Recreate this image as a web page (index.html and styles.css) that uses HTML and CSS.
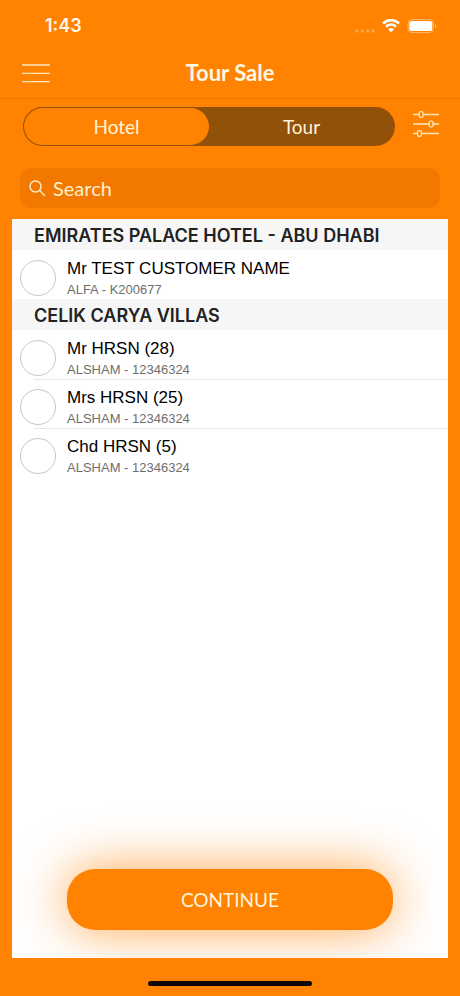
FILE: index.html
```html
<!DOCTYPE html>
<html lang="en">
<head>
  <meta charset="utf-8">
  <meta name="viewport" content="width=device-width, initial-scale=1">
  <title>Tour Sale</title>
  <link rel="stylesheet" href="styles.css">
</head>
<body>
  <div class="status-bar">
    <time class="clock">1:43</time>
    <div class="indicators">
      <svg width="20" height="18" viewBox="0 0 20 18" fill="#fff" fill-opacity=".28" aria-hidden="true">
        <circle cx="2" cy="12" r="1.800"/><circle cx="7.300" cy="12" r="1.800"/><circle cx="12.700" cy="12" r="1.800"/><circle cx="18" cy="12" r="1.800"/>
      </svg>
      <svg width="18" height="18" viewBox="0 0 18 18" fill="#fff" aria-hidden="true">
        <path d="M9 2.6c2.500 0 4.900 1 6.700 2.700a.4.4 0 0 0 .5 0l1.400-1.400a.4.4 0 0 0 0-.6 12.500 12.500 0 0 0-17.200 0 .4.4 0 0 0 0 .6l1.400 1.400a.4.4 0 0 0 .5 0A9.700 9.700 0 0 1 9 2.600z"/>
        <path d="M9 7.100c1.400 0 2.700.5 3.700 1.400.2.200.4.200.6 0l1.300-1.400a.4.4 0 0 0 0-.6 8.200 8.200 0 0 0-11.200 0 .4.4 0 0 0 0 .6l1.300 1.400c.2.200.4.200.6 0 1-.9 2.300-1.400 3.700-1.400z"/>
        <path d="M11.600 10.100a.4.4 0 0 1 0 .6l-2.300 2.300a.4.4 0 0 1-.6 0l-2.300-2.300a.4.4 0 0 1 0-.6 4.100 4.100 0 0 1 5.200 0z"/>
      </svg>
      <svg width="30" height="18" viewBox="0 0 30 18" aria-hidden="true">
        <rect x="1" y=".5" width="25.500" height="13" rx="4" fill="none" stroke="#fff" stroke-opacity=".4"/>
        <rect x="2.300" y="2" width="23" height="10" rx="2.500" fill="#fff"/>
        <path d="M28 5v4c.8-.3 1.300-1.100 1.300-2s-.5-1.700-1.300-2z" fill="#fff" fill-opacity=".45"/>
      </svg>
    </div>
  </div>

  <header class="nav-bar">
    <button class="icon-button" type="button" aria-label="Menu">
      <svg width="28" height="20" viewBox="0 0 28 20" stroke="#ffe7bd" stroke-width="1.400" aria-hidden="true">
        <path d="M0 2h28M0 10.400h28M0 18.600h28"/>
      </svg>
    </button>
    <h1 class="title">Tour Sale</h1>
  </header>

  <div class="mode-row">
    <fieldset class="segments" aria-label="Group by">
      <label class="segment"><input type="radio" name="mode" checked><span>Hotel</span></label>
      <label class="segment"><input type="radio" name="mode"><span>Tour</span></label>
    </fieldset>
    <button class="icon-button" type="button" aria-label="Filters">
      <svg width="26" height="26" viewBox="0 0 26 26" fill="none" stroke="#ffe7bd" stroke-width="1.300" aria-hidden="true">
        <path d="M0 3.500h6M10 3.500h16M0 13h16M20 13h6M0 22.500h4.500M8.500 22.500H26"/>
        <rect x="6.200" y=".7" width="3.800" height="5.600" rx="1.300"/>
        <rect x="16.200" y="10.200" width="3.800" height="5.600" rx="1.300"/>
        <rect x="4.500" y="19.700" width="3.800" height="5.600" rx="1.300"/>
      </svg>
    </button>
  </div>

  <label class="search">
    <svg width="17" height="17" viewBox="0 0 17 17" fill="none" stroke="#ffe9c4" stroke-width="1.400" stroke-linecap="round" aria-hidden="true">
      <circle cx="6.500" cy="6.500" r="5.500"/><path d="M10.600 10.600l5 5"/>
    </svg>
    <input type="search" placeholder="Search" aria-label="Search">
  </label>

  <main class="panel">
    <section>
      <h2 class="group-title">EMIRATES PALACE HOTEL - ABU DHABI</h2>
      <ul class="guests">
        <li class="guest"><label><input type="checkbox"><span class="text"><span class="name">Mr TEST CUSTOMER NAME</span><span class="detail">ALFA - K200677</span></span></label></li>
      </ul>
    </section>
    <section>
      <h2 class="group-title">CELIK CARYA VILLAS</h2>
      <ul class="guests">
        <li class="guest"><label><input type="checkbox"><span class="text"><span class="name">Mr HRSN (28)</span><span class="detail">ALSHAM - 12346324</span></span></label></li>
        <li class="guest"><label><input type="checkbox"><span class="text"><span class="name">Mrs HRSN (25)</span><span class="detail">ALSHAM - 12346324</span></span></label></li>
        <li class="guest"><label><input type="checkbox"><span class="text"><span class="name">Chd HRSN (5)</span><span class="detail">ALSHAM - 12346324</span></span></label></li>
      </ul>
    </section>
    <button class="continue" type="button">CONTINUE</button>
  </main>

  <div class="home-area"><div class="home-indicator"></div></div>
</body>
</html>
```
FILE: styles.css
```css
* {
  box-sizing: border-box;
}

body {
  margin: 0;
  min-height: 100vh;
  display: flex;
  flex-direction: column;
  background: #ff8200;
  font-family: Lato, "Liberation Sans", sans-serif;
}

button {
  border: 0;
  padding: 0;
  font: inherit;
  cursor: pointer;
}

.status-bar {
  height: 48px;
  padding: 4px 23px 0 45px;
  display: flex;
  align-items: center;
  justify-content: space-between;
}

.clock {
  color: #fff8ea;
  font: 600 18px/20px Inter, sans-serif;
}

.indicators {
  padding-top: 3px;
  display: flex;
  gap: 7px;
}

.icon-button {
  display: flex;
  background: none;
}

.nav-bar {
  height: 51px;
  padding: 0 22px;
  display: grid;
  grid-template-columns: 1fr auto 1fr;
  align-items: center;
  border-bottom: 1px solid #e97600;
}

.title {
  margin: 0;
  color: #fff8e6;
  font-size: 22px;
  line-height: 28px;
  font-weight: 700;
}

.mode-row {
  padding: 8px 21px 0 23px;
  display: flex;
  gap: 18px;
  align-items: center;
}

.mode-row .icon-button {
  padding-bottom: 6px;
}

.segments {
  flex: 1;
  min-width: 0;
  margin: 0;
  padding: 1px;
  border: 0;
  border-radius: 20px;
  background: #925108;
  display: grid;
  grid-template-columns: 1fr 1fr;
}

.segment input {
  position: absolute;
  opacity: 0;
}

.segment span {
  display: block;
  border-radius: 19px;
  color: #fff4dc;
  font-size: 19px;
  line-height: 37px;
  text-align: center;
}

.segment input:checked + span {
  background: #ff8200;
}

.search {
  height: 40px;
  margin: 22px 20px 11px;
  padding: 0 9px;
  display: flex;
  align-items: center;
  gap: 7px;
  border-radius: 11px;
  background: #f37800;
}

.search input {
  flex: 1;
  min-width: 0;
  padding: 0;
  border: 0;
  outline: 0;
  background: none;
  color: #fff4dc;
  font: 20px/24px Lato, sans-serif;
}

.search input::placeholder {
  color: #ffefcf;
  opacity: 1;
}

.panel {
  flex: 1;
  margin: 0 12px;
  display: flex;
  flex-direction: column;
  overflow: hidden;
  background: #fff;
}

.group-title {
  margin: 0;
  padding: 2px 22px 0;
  background: #f6f6f6;
  color: #222;
  font: 600 18px/29px Inter, sans-serif;
}

.guests {
  margin: 0;
  padding: 0;
  list-style: none;
}

.guest label {
  height: 49px;
  padding-left: 8px;
  display: flex;
  gap: 11px;
}

.guest + .guest label {
  background: linear-gradient(#e8e8e8, #e8e8e8) 22px 0 / 100% 1px no-repeat;
}

.guest input {
  appearance: none;
  flex: none;
  width: 36px;
  height: 36px;
  margin: 10px 0 0;
  border: 1px solid #c6c6c6;
  border-radius: 50%;
  background: #fff;
}

.guest input:checked {
  background: #ff8200;
}

.text {
  padding-top: 8px;
  display: flex;
  flex-direction: column;
  font-family: "Liberation Sans", sans-serif;
}

.name {
  color: #000;
  font-size: 17px;
  line-height: 22px;
}

.detail {
  color: #6e6e6e;
  font-size: 13px;
  line-height: 20px;
}

.continue {
  height: 61px;
  margin: auto 55px 28px;
  border-radius: 28px;
  background: #ff8200;
  box-shadow: 0 0 52px rgba(255, 130, 0, 0.7);
  color: #fff4dc;
  font-size: 19px;
}

.home-area {
  height: 38px;
  padding-top: 23px;
}

.home-indicator {
  width: 164px;
  height: 5px;
  margin: 0 auto;
  border-radius: 3px;
  background: #0c0808;
}
```
